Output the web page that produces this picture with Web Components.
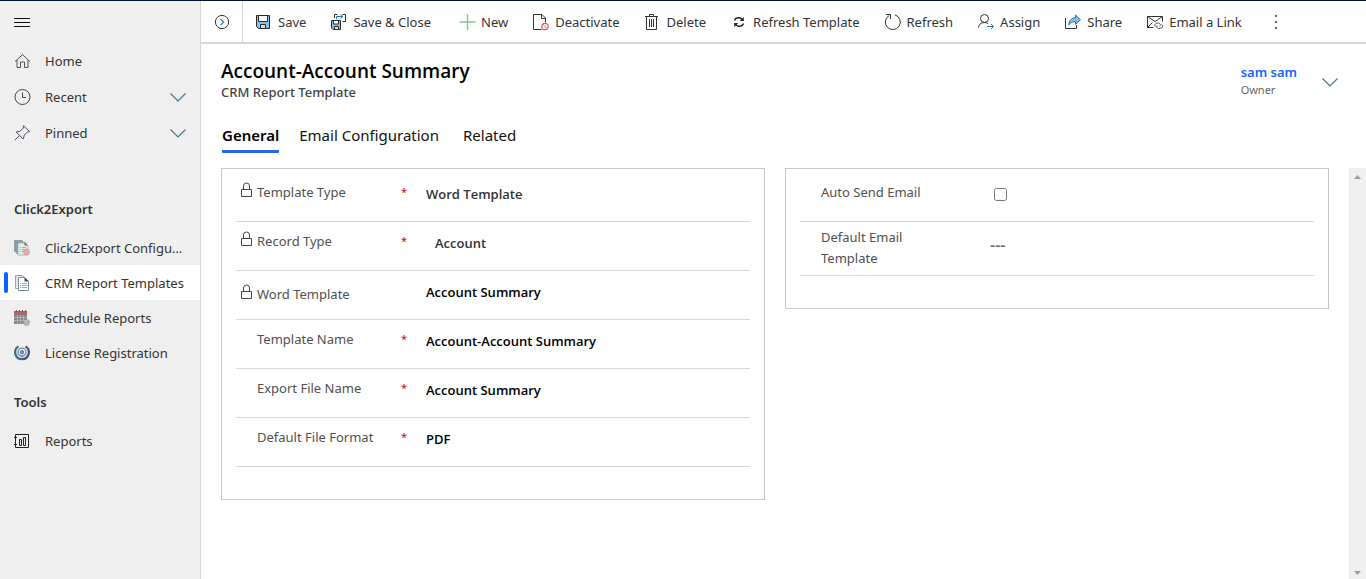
<!DOCTYPE html>
<html lang="en">
<head>
<meta charset="utf-8">
<title>Account-Account Summary</title>
<style>
  html, body { height: 100%; margin: 0; }
  body { font: 13px/20px "Noto Sans", "Open Sans", sans-serif; color: #333; background: #fff; }
</style>
</head>
<body>
<crm-app></crm-app>

<script>
const ICONS = {
  menu: `<path d="M0 4.500h16M0 8.500h16M0 12.500h16" stroke="#111"/>`,
  home: `<path d="M1 8.600 8.500 1.600 16 8.600M3 7v7.500h3.500V9h4v5.500H14V7" stroke="#4d565e"/>`,
  clock: `<circle cx="8.500" cy="8" r="7.500" stroke="#444"/><path d="M8.500 3.500v5h3.500" stroke="#444"/>`,
  pin: `<path d="M.8 15.200 5.600 10.400M2.200 7l7 7 1.200-4 3-3 2.200-.4L9.600.800l-.4 2.400-3 3z" stroke="#4d565e"/>`,
  chevron: `<path d="M.5 4.500 8 12l7.500-7.500" stroke="#44708c" stroke-width="1.100"/>`,
  config: `<path d="M0 0h8l3 3v11H3L0 11z" fill="#8d9da7" stroke="none"/><path d="M4 3h7l3 3v9H4z" fill="#e4ece8" stroke="#9caeb5" stroke-width=".8"/><path d="M10.500 1.500v4H14z" fill="#5c7280" stroke="none"/><path d="M6 7.500h1M8 7.500h4M6 9.500h1M8 9.500h3M6 11.500h1M8 11.500h2" stroke="#8fb9a6"/><circle cx="12.500" cy="12" r="2.500" fill="#ecc8c4" stroke="#d9a39e" stroke-width="1.400"/><circle cx="12.500" cy="12" r=".8" fill="#c87f7a" stroke="none"/>`,
  docs: `<path d="M1.500 13.500V.5h7l2 2M1.500 13.500h3" stroke="#8ea3ab" fill="#dfe7e8"/><path d="M4.500 2.500h6l4 4v9h-10z" fill="#fff" stroke="#7d9199"/><path d="M10.500 2v4.500H15z" fill="#39505c" stroke="none"/><path d="M6 8.500h1M8 8.500h5M6 10.500h1M8 10.500h5M6 12.500h1M8 12.500h5" stroke="#86b5a4"/>`,
  calendar: `<path d="M0 1h13v13H0z" fill="#85868a" stroke="none"/><path d="M0 1h13v3.500H0z" fill="#b9605c" stroke="none"/><path d="M2.500 0v2M5.500 0v2M8.500 0v2M11.500 0v2" stroke="#666"/><path d="M0 7.500h13M0 10.500h13M3.500 5v9M6.500 5v9M9.500 5v9" stroke="#b9b9bb" stroke-width=".8"/><circle cx="12.500" cy="12.500" r="3" fill="#c4c4c2" stroke="#a3a19f"/><path d="m11 12.500 1 1 2-2" stroke="#8d7b78"/>`,
  license: `<path d="M4.500 1.400A6.900 6.900 0 0 0 8 14.200" stroke="#35708f" stroke-width="2.200"/><path d="M11.500 1.400A6.900 6.900 0 0 1 8 14.200" stroke="#46507f" stroke-width="2.200"/><circle cx="8" cy="7.200" r="4" stroke="#6b84a6" stroke-width="1.200"/><circle cx="8" cy="7.200" r="1.600" fill="#9fa9c4" stroke="#4d5f8c"/><path d="M8 9.500v3" stroke="#7287a8"/>`,
  reports: `<path d="M1.500 1.500h13v13h-13zM0 4.500h3M0 11.500h3" stroke="#222"/><path d="M5.500 6.500h2v6h-2zM9.500 4.500h2v8h-2z" stroke="#222"/>`,
  expand: `<circle cx="8" cy="8" r="6.600" stroke="#333"/><path d="m6.500 4.800 3.200 3.200-3.200 3.200" stroke="#2f76c3" stroke-width="1.200"/>`,
  save: `<path d="M.5 1.500h13v13h-11l-2-2z" fill="#83bfec" stroke="#2b2b2b"/><path d="M2.500 1.500h9v6h-9z" fill="#fff" stroke="#2b2b2b"/><path d="M4.500 10.500h5v4h-5z" fill="#d8d8d8" stroke="#2b2b2b"/>`,
  saveClose: `<path d="M.5 6.500h9v9h-7.500L.5 14z" fill="#83bfec" stroke="#2b2b2b"/><path d="M2.500 6.500h5v3.500h-5z" fill="#fff" stroke="#2b2b2b"/><path d="M3.500 12.500h4v3h-4z" fill="#ddd" stroke="#2b2b2b"/><path d="M3.500 4V.5h3M11.500.5h3v7h-3" stroke="#2b2b2b"/><path d="M5.500 5V2.500h6M9.500.5l2.300 2-2.300 2" stroke="#1f6fb5"/>`,
  plus: `<path d="M8.500 0v16M.5 8h16" stroke="#7cc796" stroke-width="1.400"/>`,
  deactivate: `<path d="M8.500 15.500h-8V.5h8.500L12.500 4v4.500M8.500.5v4h4" stroke="#333"/><circle cx="12" cy="12.500" r="3.200" fill="#fff" stroke="#ec5555" stroke-width="1.200"/><path d="m9.800 10.300 4.400 4.400" stroke="#ec5555"/>`,
  trash: `<path d="M0 2.500h13M4.500 2.500V.5h4v2M1.500 2.500v13h10v-13M4.500 5v8M6.500 5v8M8.500 5v8" stroke="#333"/>`,
  sync: `<path d="M3.500 6.500C4.300 4.400 6 3.700 7.600 3.700c1.500 0 2.900.7 3.700 2M12.500 9.500c-.8 2-2.400 2.800-4.100 2.800-1.500 0-2.800-.6-3.700-1.800" stroke="#222" stroke-width="1.400"/><path d="M12.800 3v4H8.800zM3.200 13V9h4z" fill="#222" stroke="none"/>`,
  refresh: `<path d="M10 .9A7.500 7.500 0 1 1 4.200 1.500M1 .5h4.500V5" stroke="#333"/>`,
  assign: `<circle cx="6.500" cy="4.500" r="4" stroke="#333"/><path d="M.5 13.500C.8 10.300 3 8.500 6.500 8.500c1.500 0 2.800.4 3.700 1.300" stroke="#333"/><path d="M9 12.500h6.500M13 10l2.500 2.500L13 15" stroke="#2673b8"/>`,
  share: `<path d="M.5 4v10.500h11V11" stroke="#333"/><path d="M10.500 1 15.500 5.700l-5 4.600V7.600C7.500 7.600 5.400 8.600 3.800 11c.2-4.500 2.500-7 6.700-7.300z" fill="#83bfec" stroke="#1f6fb5"/>`,
  mail: `<path d="M6.500 13.500h-6v-11h15v5M.5 2.500 8 7.500l7.500-5M.5 13.500l5-5" stroke="#333"/><path d="M8.300 12.700a2.200 2.200 0 0 1 1.500-3.500l1.500-.2a2.100 2.100 0 0 1 1.500 3.500M14.700 10.300a2.200 2.200 0 0 1-1.500 4l-1.700.2a2 2 0 0 1-1.300-3.300" stroke="#555"/>`,
  more: `<path d="M7 1h2v2H7zM7 7h2v2H7zM7 13h2v2H7z" fill="#666"/>`,
  lock: `<path d="M1.500 7.500h10v7h-10zM3.500 7.500V4a3 3 0 0 1 6 0v3.500" stroke="#444"/>`,
};

const define = (name, html, init) => {
  const template = document.createElement('template');
  template.innerHTML = html;
  customElements.define(name, class extends HTMLElement {
    constructor() {
      super();
      this.attachShadow({ mode: 'open' }).append(template.content.cloneNode(true));
    }
    connectedCallback() {
      if (init) init(this, this.shadowRoot);
    }
  });
};

const iconMarkup = name => `<ui-icon name="${name}"></ui-icon>`;

define('ui-icon', `
  <style>
    :host { display: block; flex: none; width: 16px; height: 16px; }
    svg { display: block; width: 100%; height: 100%; fill: none; overflow: visible; }
  </style>
  <svg viewBox="0 0 16 16" aria-hidden="true"></svg>`,
  (el, root) => { root.querySelector('svg').innerHTML = ICONS[el.getAttribute('name')]; });

define('nav-item', `
  <style>
    :host { display: block; }
    a { box-sizing: border-box; display: flex; align-items: center; gap: 15px; height: 35px; padding: 0 14px;
        color: #333; text-decoration: none; position: relative; }
    .label { flex: 1; min-width: 0; overflow: hidden; text-overflow: ellipsis; white-space: nowrap; }
    .chevron { display: none; }
    :host([expandable]) .chevron { display: block; }
    :host([selected]) a { background: #fff; }
    :host([selected]) a::before { content: ""; position: absolute; left: 4px; top: 7px; width: 4px; height: 21px;
        border-radius: 2px; background: #0b63ff; }
  </style>
  <a href="#"><span class="icon"></span><span class="label"><slot></slot></span><ui-icon class="chevron" name="chevron"></ui-icon></a>`,
  (el, root) => {
    root.querySelector('.icon').innerHTML = iconMarkup(el.getAttribute('icon'));
    if (el.hasAttribute('selected')) root.querySelector('a').setAttribute('aria-current', 'page');
  });

define('nav-group', `
  <style>
    :host { display: block; }
    h2 { margin: 0; padding: 0 14px; font-size: 13px; line-height: 20px; font-weight: 600; color: #333; }
    div { padding-top: 11px; }
  </style>
  <h2></h2>
  <div><slot></slot></div>`,
  (el, root) => { root.querySelector('h2').textContent = el.getAttribute('heading'); });

define('side-nav', `
  <style>
    :host { display: block; box-sizing: border-box; background: #efefef; border-right: 1px solid #d6d6d6; }
    button { display: block; margin: 0; padding: 13px 14px; border: 0; background: none; }
    nav { display: flex; flex-direction: column; }
    .top { display: grid; gap: 1px; padding-bottom: 49px; }
    nav-group + nav-group { margin-top: 22px; }
  </style>
  <button aria-label="Site map"><ui-icon name="menu"></ui-icon></button>
  <nav>
    <div class="top">
      <nav-item icon="home">Home</nav-item>
      <nav-item icon="clock" expandable>Recent</nav-item>
      <nav-item icon="pin" expandable>Pinned</nav-item>
    </div>
    <nav-group heading="Click2Export">
      <nav-item icon="config">Click2Export Configuration</nav-item>
      <nav-item icon="docs" selected>CRM Report Templates</nav-item>
      <nav-item icon="calendar">Schedule Reports</nav-item>
      <nav-item icon="license">License Registration</nav-item>
    </nav-group>
    <nav-group heading="Tools">
      <nav-item icon="reports">Reports</nav-item>
    </nav-group>
  </nav>`);

define('cmd-button', `
  <style>
    :host { display: block; }
    button { display: flex; align-items: center; gap: 6px; height: 41px; margin: 0; padding: 0 12px; border: 0;
        background: none; font: inherit; color: #333; white-space: nowrap; }
    :host([icon-only]) button { padding-left: 13px; }
  </style>
  <button><span class="icon"></span><slot></slot></button>`,
  (el, root) => {
    root.querySelector('.icon').innerHTML = iconMarkup(el.getAttribute('icon'));
    if (el.hasAttribute('icon-only')) root.querySelector('button').setAttribute('aria-label', el.getAttribute('icon-only'));
  });

define('command-bar', `
  <style>
    :host { display: flex; border-bottom: 2px solid #d8d8d8; }
    .toggle { border-right: 1px solid #d6d6d6; }
    .commands { display: flex; gap: 4px; padding-left: 1px; }
    .group { display: flex; gap: 1px; }
  </style>
  <cmd-button class="toggle" icon="expand" icon-only="Open record set"></cmd-button>
  <div class="commands">
    <div class="group">
      <cmd-button icon="save">Save</cmd-button>
      <cmd-button icon="saveClose">Save &amp; Close</cmd-button>
    </div>
    <div class="group">
      <cmd-button icon="plus">New</cmd-button>
      <cmd-button icon="deactivate">Deactivate</cmd-button>
      <cmd-button icon="trash">Delete</cmd-button>
      <cmd-button icon="sync">Refresh Template</cmd-button>
      <cmd-button icon="refresh">Refresh</cmd-button>
      <cmd-button icon="assign">Assign</cmd-button>
      <cmd-button icon="share">Share</cmd-button>
      <cmd-button icon="mail">Email a Link</cmd-button>
      <cmd-button icon="more" icon-only="More commands"></cmd-button>
    </div>
  </div>`);

define('record-header', `
  <style>
    :host { display: flex; justify-content: space-between; padding: 15px 28px 0 20px; }
    h1 { margin: 0; font: 600 19px/24px "Open Sans", sans-serif; color: #000; }
    p { margin: 0; font-weight: 500; line-height: 18px; color: #444; }
    .owner { display: flex; gap: 25px; align-items: center; }
    .who { display: grid; }
    a { font-weight: 600; line-height: 20px; color: #1463ff; text-decoration: none; }
    .role { font-size: 11px; line-height: 16px; color: #666; }
    button { margin: 0; padding: 4px 0 0; border: 0; background: none; }
  </style>
  <div><h1>Account-Account Summary</h1><p>CRM Report Template</p></div>
  <div class="owner">
    <div class="who"><a href="#">sam sam</a><span class="role">Owner</span></div>
    <button aria-label="More header fields"><ui-icon name="chevron"></ui-icon></button>
  </div>`);

define('tab-list', `
  <style>
    :host { display: flex; gap: 20px; padding: 22px 21px 15px; }
    button { margin: 0; padding: 0 0 3px; border: 0; border-bottom: 3px solid transparent; background: none;
        font: inherit; font-size: 15px; line-height: 24px; color: #111; }
    button[aria-selected=true] { border-color: #2266e3; border-radius: 1px; font-weight: 600; color: #000; }
    button:last-child { margin-left: 4px; }
  </style>
  <button role="tab" aria-selected="true">General</button>
  <button role="tab" aria-selected="false">Email Configuration</button>
  <button role="tab" aria-selected="false">Related</button>`);

define('form-field', `
  <style>
    :host { display: grid; grid-template-columns: 17px 144px 25px 1fr; align-items: start; box-sizing: border-box;
        min-height: 49px; padding: 9px 0 8px 4px; border-bottom: 1px solid #d8d8d8; }
    :host([lookup]) label, :host([lookup]) .lock { padding-top: 4px; }
    label { color: #505050; }
    .star { font-size: 11px; line-height: 20px; color: #e00000; }
    .value { padding-top: 2px; font: 600 13px/20px "Open Sans", sans-serif; color: #000; }
    input[type=text], select, output { display: block; box-sizing: border-box; width: 100%; height: 20px; margin: 0;
        padding: 0; border: 0; background: none; font: inherit; color: inherit; appearance: none; opacity: 1; }
    :host([locked]) select { color: #333; }
    :host([indent]) .value { padding-left: 9px; }
    a { color: inherit; text-decoration: none; }
    input[type=checkbox] { display: block; width: 13px; height: 13px; margin: 4px; }
    :host([narrow]) { grid-template-columns: 17px 110px 59px 1fr; }
    :host([narrow]) label { line-height: 21px; }
    :host([type=empty]) .value { padding-top: 8px; }
    output { font-size: 16px; color: #666; }
  </style>
  <span class="lock"></span>
  <label for="control"></label>
  <span class="star" aria-hidden="true"></span>
  <div class="value"></div>`,
  (el, root) => {
    const value = el.getAttribute('value') || '';
    if (el.hasAttribute('locked')) root.querySelector('.lock').innerHTML = iconMarkup('lock');
    root.querySelector('label').textContent = el.getAttribute('label');
    if (el.hasAttribute('required')) root.querySelector('.star').textContent = '*';
    root.querySelector('.value').innerHTML = {
      select: `<select id="control"><option>${value}</option></select>`,
      text: `<input type="text" id="control" value="${value}">`,
      link: `<a href="#" id="control">${value}</a>`,
      checkbox: `<input type="checkbox" id="control">`,
      empty: `<output id="control">${value}</output>`,
    }[el.getAttribute('type')];
  });

define('form-section', `
  <style>
    :host { display: block; padding: 4px 14px 32px; border: 1px solid #c8c8c8; background: #fff; }
  </style>
  <slot></slot>`);

define('scroll-rail', `
  <style>
    :host { display: flex; flex-direction: column; justify-content: space-between; align-items: center;
        flex: none; box-sizing: border-box; width: 17px; padding: 7px 0 4px; background: #f0f0f0; }
    svg { display: block; width: 7px; height: 4px; fill: #a0a0a0; }
  </style>
  <svg viewBox="0 0 7 4"><path d="M0 4 3.500 0 7 4z"/></svg>
  <svg viewBox="0 0 7 4"><path d="M0 0 3.500 4 7 0z"/></svg>`);

define('crm-app', `
  <style>
    :host { display: grid; grid-template-columns: 201px minmax(0, 1fr); box-sizing: border-box; min-height: 100%;
        border-top: 1px solid #001433; }
    main { display: flex; flex-direction: column; min-width: 0; }
    .body { flex: 1; display: flex; }
    .sections { flex: 1; display: grid; grid-template-columns: 1fr 1fr; gap: 20px; align-items: start; padding: 0 20px; }
    .double { min-height: 54px; padding-top: 5px; padding-bottom: 6px; }
  </style>
  <side-nav></side-nav>
  <main>
    <command-bar></command-bar>
    <record-header></record-header>
    <tab-list role="tablist"></tab-list>
    <div class="body">
      <div class="sections">
        <form-section>
          <form-field type="select" locked required label="Template Type" value="Word Template"></form-field>
          <form-field type="select" locked required indent label="Record Type" value="Account"></form-field>
          <form-field type="link" locked lookup label="Word Template" value="Account Summary"></form-field>
          <form-field type="text" required label="Template Name" value="Account-Account Summary"></form-field>
          <form-field type="text" required label="Export File Name" value="Account Summary"></form-field>
          <form-field type="select" required label="Default File Format" value="PDF"></form-field>
        </form-section>
        <form-section>
          <form-field type="checkbox" narrow label="Auto Send Email"></form-field>
          <form-field class="double" type="empty" narrow label="Default Email Template" value="---"></form-field>
        </form-section>
      </div>
      <scroll-rail></scroll-rail>
    </div>
  </main>`);
</script>
</body>
</html>
